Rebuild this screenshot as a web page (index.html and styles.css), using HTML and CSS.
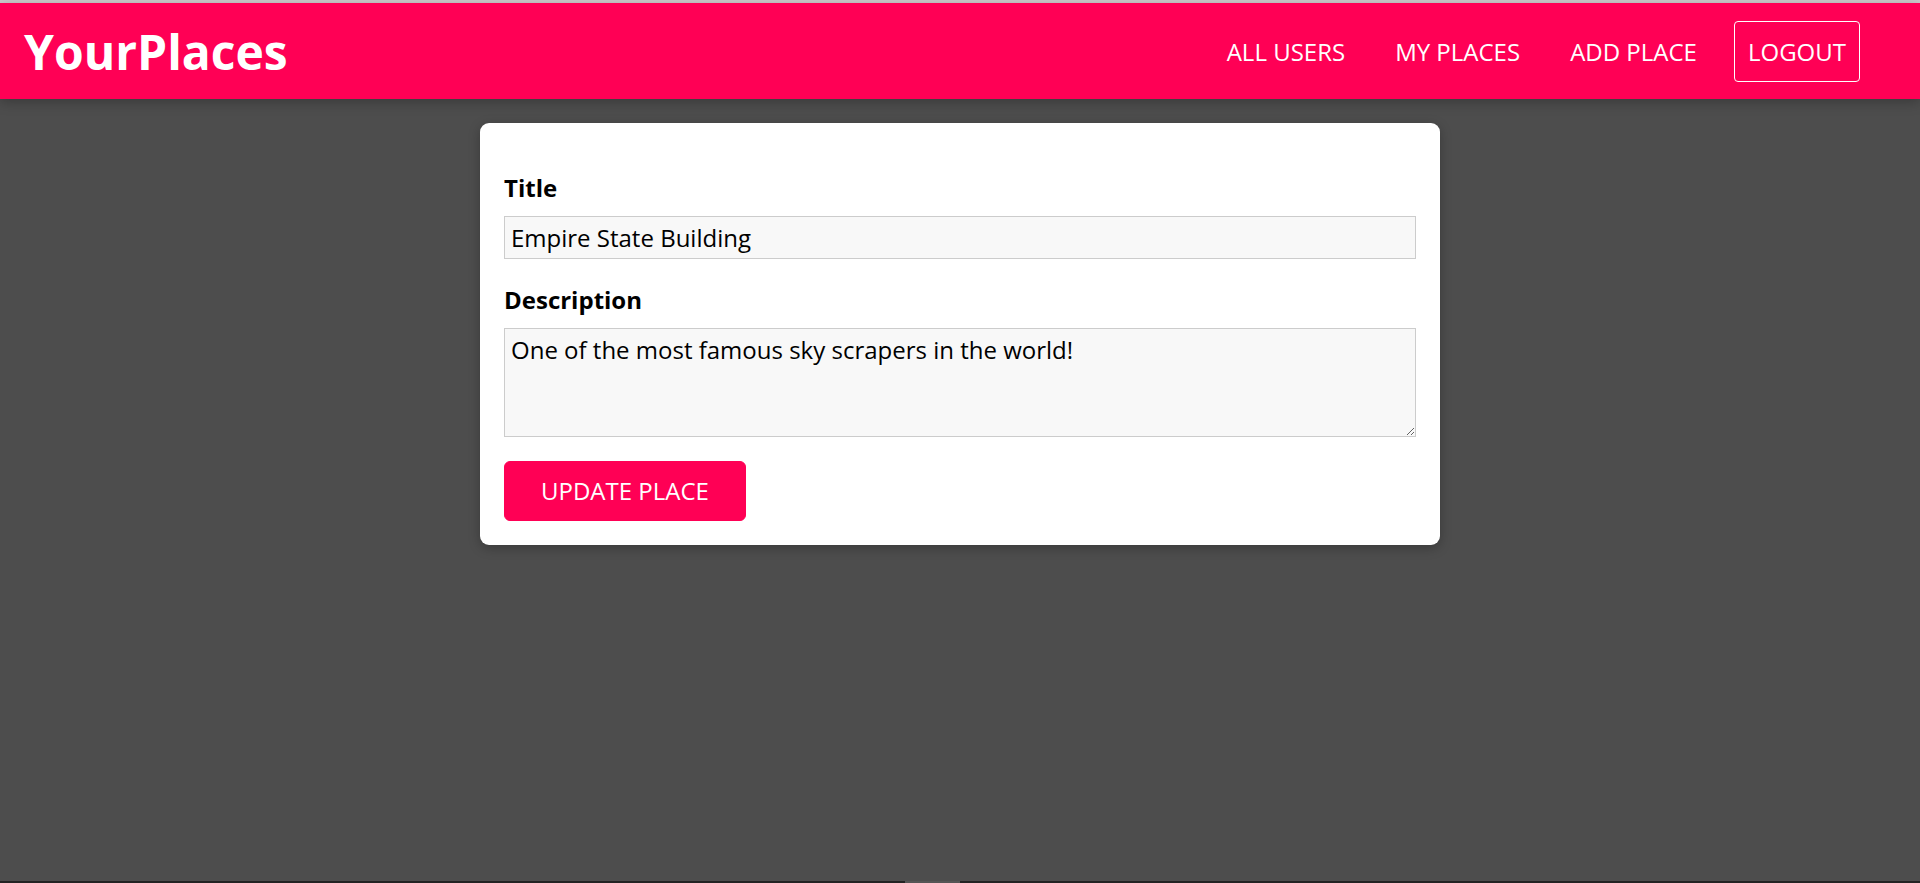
FILE: index.html
```html
<!DOCTYPE html>
<html lang="en">
<head>
<meta charset="utf-8">
<title>YourPlaces</title>
<link rel="stylesheet" href="styles.css">
</head>
<body>
<div class="top-strip"></div>
<header class="main-header">
  <h1 class="main-title"><a href="#">YourPlaces</a></h1>
  <nav class="header-nav">
    <ul class="nav-links">
      <li><a href="#">ALL USERS</a></li>
      <li><a href="#">MY PLACES</a></li>
      <li><a href="#">ADD PLACE</a></li>
      <li><button type="button">LOGOUT</button></li>
    </ul>
  </nav>
</header>
<main class="main">
  <form class="place-form">
    <div class="form-control">
      <label for="title">Title</label>
      <input id="title" type="text" value="Empire State Building">
    </div>
    <div class="form-control">
      <label for="description">Description</label>
      <textarea id="description" rows="3">One of the most famous sky scrapers in the world!</textarea>
    </div>
    <button type="button" class="button">UPDATE PLACE</button>
  </form>
</main>
<div class="bottom-strip"><span class="bottom-thumb"></span></div>
</body>
</html>
```
FILE: styles.css
```css
* {
  box-sizing: border-box;
}

html, body {
  margin: 0;
  padding: 0;
}

body {
  font-family: "Open Sans", "Liberation Sans", sans-serif;
  font-size: 24px;
  background: #4d4d4d;
  min-height: 100vh;
  display: flex;
  flex-direction: column;
}

.top-strip {
  height: 3px;
  background: #cccccc;
}

.main-header {
  height: 96px;
  display: flex;
  align-items: center;
  justify-content: space-between;
  background: #ff0055;
  box-shadow: 0 3px 12px rgba(0, 0, 0, 0.26);
  padding: 0 48px 0 24px;
  position: relative;
  z-index: 5;
}

.main-title {
  margin: 0;
  font-size: 48px;
  font-weight: bold;
  line-height: normal;
}

.main-title a {
  color: #ffffff;
  text-decoration: none;
}

.nav-links {
  list-style: none;
  margin: 0;
  padding: 0;
  display: flex;
  align-items: center;
}

.nav-links li {
  margin: 0 12px;
}

.nav-links a,
.nav-links button {
  display: block;
  font: inherit;
  color: #ffffff;
  text-decoration: none;
  padding: 12px;
  border: 1px solid transparent;
  background: transparent;
  line-height: normal;
}

.nav-links button {
  border: 1px solid #ffffff;
  border-radius: 4px;
  cursor: pointer;
  padding: 13px;
}

.main {
  flex: 1;
  padding-top: 24px;
}

.place-form {
  width: 960px;
  margin: 0 auto;
  padding: 24px;
  background: #ffffff;
  border-radius: 9px;
  box-shadow: 0 3px 12px rgba(0, 0, 0, 0.26);
}

.form-control {
  margin: 24px 0;
}

.form-control label {
  display: block;
  font-weight: bold;
  margin-bottom: 12px;
  color: #000000;
}

.form-control input,
.form-control textarea {
  display: block;
  width: 100%;
  font: inherit;
  color: #000000;
  border: 1px solid #cccccc;
  background: #f8f8f8;
  padding: 4px 6px;
  margin: 0;
  line-height: normal;
}

.form-control input {
  height: 43px;
}

.form-control textarea {
  height: 109px;
}

.button {
  font: inherit;
  line-height: normal;
  padding: 12px 36px 13px;
  border: 1px solid #ff0055;
  border-radius: 6px;
  background: #ff0055;
  color: #ffffff;
  cursor: pointer;
  display: inline-block;
}

.bottom-strip {
  height: 2px;
  background: #232323;
  display: flex;
  justify-content: center;
}

.bottom-thumb {
  width: 55px;
  height: 2px;
  background: #555555;
  margin-left: -55px;
}
```
